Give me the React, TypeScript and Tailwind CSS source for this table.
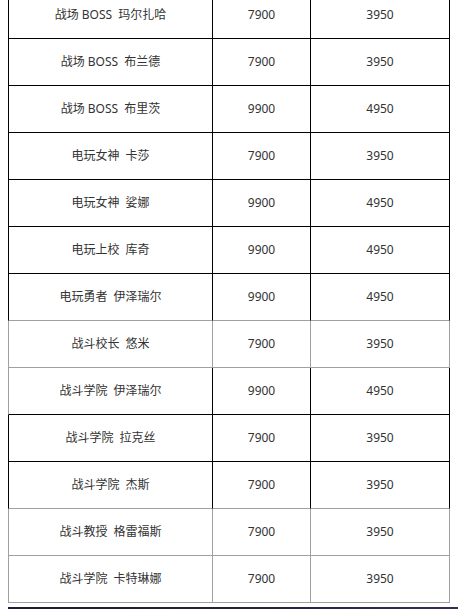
type Tone = 'k' | 'g';

interface Row {
  name: string;
  price: string;
  half: string;
  left: Tone;
  inner: Tone;
  bottom: Tone;
}

const rows: Row[] = [
  { name: '战场 BOSS  玛尔扎哈', price: '7900', half: '3950', left: 'k', inner: 'k', bottom: 'k' },
  { name: '战场 BOSS  布兰德', price: '7900', half: '3950', left: 'k', inner: 'k', bottom: 'k' },
  { name: '战场 BOSS  布里茨', price: '9900', half: '4950', left: 'k', inner: 'k', bottom: 'k' },
  { name: '电玩女神  卡莎', price: '7900', half: '3950', left: 'k', inner: 'k', bottom: 'k' },
  { name: '电玩女神  娑娜', price: '9900', half: '4950', left: 'k', inner: 'k', bottom: 'k' },
  { name: '电玩上校  库奇', price: '9900', half: '4950', left: 'k', inner: 'k', bottom: 'k' },
  { name: '电玩勇者  伊泽瑞尔', price: '9900', half: '4950', left: 'k', inner: 'k', bottom: 'g' },
  { name: '战斗校长  悠米', price: '7900', half: '3950', left: 'g', inner: 'g', bottom: 'g' },
  { name: '战斗学院  伊泽瑞尔', price: '9900', half: '4950', left: 'g', inner: 'k', bottom: 'k' },
  { name: '战斗学院  拉克丝', price: '7900', half: '3950', left: 'k', inner: 'k', bottom: 'k' },
  { name: '战斗学院  杰斯', price: '7900', half: '3950', left: 'k', inner: 'k', bottom: 'g' },
  { name: '战斗教授  格雷福斯', price: '7900', half: '3950', left: 'g', inner: 'g', bottom: 'g' },
  { name: '战斗学院  卡特琳娜', price: '7900', half: '3950', left: 'g', inner: 'g', bottom: 'g' },
];

const leftCls: Record<Tone, string> = {
  k: 'border-l-black',
  g: 'border-l-[#a0a0a0]',
};
const rightCls: Record<Tone, string> = {
  k: 'border-r-black',
  g: 'border-r-[#a0a0a0]',
};
const bottomCls: Record<Tone, string> = {
  k: 'border-b-black',
  g: 'border-b-[#a0a0a0]',
};

const cell = 'h-[47px] p-0 text-center align-middle border-r border-b border-solid';

export default function App() {
  return (
    <div
      className="min-h-screen bg-white px-2 overflow-hidden text-[12px] text-[#333]"
      style={{ fontFamily: '"Noto Sans", "Noto Sans CJK SC", sans-serif' }}
    >
      <table className="mt-[-8px] w-[442px] table-fixed border-separate border-spacing-0">
        <colgroup>
          <col className="w-[205px]" />
          <col className="w-[98px]" />
          <col className="w-[139px]" />
        </colgroup>
        <tbody>
          {rows.map((r, i) => (
            <tr key={i}>
              <td className={`${cell} border-l ${leftCls[r.left]} ${rightCls[r.inner]} ${bottomCls[r.bottom]} whitespace-pre`}>
                {r.name}
              </td>
              <td className={`${cell} ${rightCls[r.inner]} ${bottomCls[r.bottom]}`}>{r.price}</td>
              <td className={`${cell} ${rightCls[r.inner]} ${bottomCls[r.bottom]}`}>{r.half}</td>
            </tr>
          ))}
        </tbody>
      </table>
      <div className="mt-[4px] -mr-2 h-4 bg-gradient-to-r from-[#1c1a36] via-[#24203f] to-[#3b2a52]" />
    </div>
  );
}
